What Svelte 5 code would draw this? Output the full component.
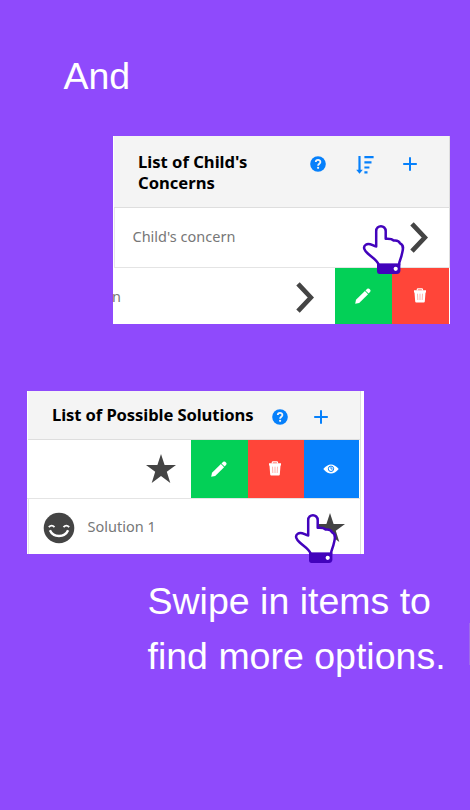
<script>
  const star = 'M15 0 L18.6 11 H30 L20.8 17.7 L24.3 29 L15 22 L5.7 29 L9.2 17.7 L0 11 H11.4 Z';
</script>

{#snippet help()}
  <svg class="help" viewBox="0 0 16 16" width="16" height="16">
    <circle cx="8" cy="8" r="7.8" fill="#0680fb" />
    <path d="M5.8 6.1 C5.8 3.2 10.4 3.2 10.4 6 C10.4 7.7 8.1 7.7 8.1 9.7" fill="none" stroke="#f4f4f4" stroke-width="1.8" />
    <circle cx="8.1" cy="11.8" r="1.1" fill="#f4f4f4" />
  </svg>
{/snippet}

{#snippet plus()}
  <svg class="plus" viewBox="0 0 14 14" width="14" height="14">
    <path d="M7 0.2 V13.8 M0.2 7 H13.8" stroke="#0680fb" stroke-width="2" />
  </svg>
{/snippet}

{#snippet chevron()}
  <svg class="chevron" viewBox="0 0 18 31" width="18" height="31">
    <path d="M2 1.8 L14.8 15.5 L2 29.2" fill="none" stroke="#444" stroke-width="4.7" />
  </svg>
{/snippet}

{#snippet pencil()}
  <svg viewBox="0 0 16 16" width="16" height="16" fill="#fff">
    <path d="M0.2 15.8 L1 11.8 L9.9 3 L13.1 6.2 L4.2 15 Z" />
    <path d="M10.5 2.4 L12.2 .8 Q13.3 0 14.2 .8 L15.2 1.8 Q16 2.7 15.2 3.8 L13.6 5.5 Z" />
  </svg>
{/snippet}

{#snippet trash()}
  <svg viewBox="0 0 14 15" width="14" height="15">
    <path d="M4.3 2.6 V1.4 Q4.3 .8 5 .8 H8.8 Q9.5 .8 9.5 1.4 V2.6" fill="none" stroke="#fff" stroke-width="1.2" />
    <path d="M1 2.3 H13 V4.5 H1 Z M1.5 4.5 H12.5 L11.8 13.5 Q11.7 14.5 10.8 14.5 H3.2 Q2.3 14.5 2.2 13.5 Z" fill="#fff" />
    <path d="M4.5 5.7 L4.8 12 M7 5.7 V12 M9.5 5.7 L9.2 12" stroke="#ff9f99" stroke-width=".8" />
  </svg>
{/snippet}

{#snippet hand(cls)}
  <svg class="hand {cls}" viewBox="0 0 44 52" width="44" height="52">
    <path
      d="M17 42 C14.8 36.5 9.5 34 5.8 30.5 C2.5 27.5 .4 24 3.8 21.7 C7.5 19.2 11 23.2 14.2 23.4 V8.2 C14.2 1.6 23.7 1.6 23.7 8.2 V15.8 Q29.5 15.4 31.7 17.6 Q36.7 17 38 20.4 C43 22.2 40.5 28 39.8 31.5 C39 36 37.2 37.5 37 42 Z"
      fill="#fff" stroke="#4203bc" stroke-width="2.5" stroke-linejoin="round" />
    <path d="M15 40.5 H38.4 V48 Q37.8 51 35 51 H17.5 Q15 51 15 48 Z" fill="#4203bc" />
    <circle cx="33.7" cy="45.8" r="2.1" fill="#fff" />
  </svg>
{/snippet}

<main>
  <p class="and">And</p>

  <section class="panel concerns">
    <header>
      <h2>List of Child's<br />Concerns</h2>
      <div class="tools">
        {@render help()}
        <svg class="sort" viewBox="0 0 18 18" width="18" height="18">
          <path d="M3.5 0 V16" stroke="#0680fb" stroke-width="2.2" />
          <path d="M0.2 13.7 H6.8 L3.5 17.8 Z" fill="#0680fb" />
          <path d="M8.4 1.2 H17.6 M8.4 6.4 H15.5 M8.4 11.5 H13.4 M8.4 16.4 H11.5" stroke="#0680fb" stroke-width="2.2" />
        </svg>
        {@render plus()}
      </div>
    </header>
    <div class="row first">
      <span class="label concern">Child's concern</span>
      {@render chevron()}
    </div>
    <div class="row swiped">
      <span class="label tail">n</span>
      {@render chevron()}
      <div class="action edit">{@render pencil()}</div>
      <div class="action remove">{@render trash()}</div>
    </div>
    {@render hand('upper')}
  </section>

  <section class="panel solutions">
    <header>
      <h2>List of Possible Solutions</h2>
      <div class="tools">
        {@render help()}
        {@render plus()}
      </div>
    </header>
    <div class="row swiped">
      <svg class="star" viewBox="0 0 30 29" width="30" height="29"><path d={star} fill="#444" /></svg>
      <div class="action edit">{@render pencil()}</div>
      <div class="action remove">{@render trash()}</div>
      <div class="action view">
        <svg viewBox="0 0 16 10" width="16" height="10">
          <path d="M.3 5 Q8 -4.2 15.7 5 Q8 14.2 .3 5 Z" fill="#fff" />
          <circle cx="8" cy="4.8" r="2.7" fill="#fff" stroke="#0680fb" stroke-width="1" />
          <path d="M8 3 V5 H9.8" fill="none" stroke="#0680fb" stroke-width=".9" />
        </svg>
      </div>
    </div>
    <div class="row last">
      <svg class="smile" viewBox="0 0 32 32" width="32" height="32">
        <circle cx="16" cy="16" r="15.3" fill="#444" />
        <path d="M5.8 15.2 Q8.7 11.9 11.5 15.2 M20.5 15.2 Q23.3 11.9 26.2 15.2" fill="none" stroke="#fff" stroke-width="1.8" />
        <path d="M6.9 18.3 Q9.5 24 16 24 Q22.5 24 25.1 18.3" fill="none" stroke="#fff" stroke-width="2.4" />
      </svg>
      <span class="label">Solution 1</span>
      <svg class="star" viewBox="0 0 30 29" width="30" height="29"><path d={star} fill="#444" /></svg>
    </div>
    {@render hand('lower')}
  </section>

  <p class="swipe">Swipe in items to<br />find more options.</p>
  <i class="edge"></i>
</main>

<style>
  main {
    position: relative;
    box-sizing: border-box;
    width: 470px;
    height: 810px;
    padding-top: 49px;
    overflow: hidden;
    background: #8f4afc;
    color: #fff;
    font-family: "Liberation Sans", Arial, sans-serif;
  }
  p { margin: 0; font-size: 37.5px; line-height: 55px; white-space: nowrap; }
  .and { margin-left: 63.5px; }
  .swipe { margin: 20px 0 0 147.5px; }
  svg { display: block; flex: none; }
  .panel {
    position: relative;
    width: 337px;
    background: #fff;
    font-family: "Noto Sans", "Open Sans", sans-serif;
  }
  .concerns { height: 188px; margin: 32px 0 0 113px; }
  .solutions { height: 163px; margin: 67px 0 0 27px; }
  header {
    box-sizing: border-box;
    display: flex;
    margin-left: 1px;
    background: #f4f4f4;
    border-bottom: 1px solid #dedede;
    border-right: 1px solid #dedede;
  }
  .concerns header { height: 72px; padding: 15px 32px 0 24px; }
  .solutions header { height: 49px; width: 333px; padding: 13px 32px 0 24px; }
  h2 {
    margin: 0;
    color: #000;
    font-size: 16.6px;
    font-weight: 700;
    line-height: 21px;
    letter-spacing: -0.1px;
    white-space: nowrap;
  }
  .concerns h2 { letter-spacing: 0; }
  .tools { display: flex; margin-left: auto; }
  .concerns .help { margin: 5px 30px 0 0; }
  .sort { margin: 5px 29px 0 0; }
  .concerns .plus { margin-top: 6px; }
  .solutions .help { margin: 5px 26px 0 0; }
  .solutions .plus { margin-top: 6px; }
  .row { box-sizing: border-box; display: flex; align-items: center; }
  .label {
    color: #777;
    font-size: 14.5px;
    line-height: 20px;
    padding-bottom: 3px;
    white-space: nowrap;
  }
  .first {
    height: 60px;
    padding: 0 21px 0 17.5px;
    margin-left: 1px;
    border-left: 1px solid #e8e8e8;
    border-right: 1px solid #dedede;
    border-bottom: 1px solid #e4e4e4;
  }
  .first .chevron { margin-left: auto; }
  .concerns .swiped { height: 56px; margin-right: 1px; }
  .concerns .swiped .label { padding-bottom: 0; }
  .tail { margin-left: -1px; }
  .swiped .chevron { margin: 2px 21px 0 auto; }
  .action {
    box-sizing: border-box;
    display: flex;
    align-items: center;
    justify-content: center;
    align-self: stretch;
    padding: 0 1px 1px 0;
  }
  .edit { width: 57px; background: #03d057; }
  .remove { width: 57px; background: #ff4539; }
  .view { width: 55px; background: #0680fb; }
  .solutions .edit, .solutions .remove { width: 56.5px; }
  .solutions .swiped {
    width: 334px;
    height: 59px;
    padding-right: 1px;
    border-right: 1px solid #dedede;
    border-bottom: 1px solid #e4e4e4;
  }
  .solutions .swiped .star { margin: 0 15px 1px auto; }
  .last {
    width: 333px;
    height: 55px;
    padding: 2px 15px 0 14px;
    margin-left: 1px;
    border-left: 1px solid #e8e8e8;
    border-right: 1px solid #dedede;
  }
  .last .label { margin-left: 12.5px; }
  .last .star { margin-left: auto; }
  .hand { position: absolute; }
  .upper { left: 248.5px; top: 86.5px; }
  .lower { left: 266.5px; top: 120.5px; }
  .edge { position: absolute; right: 0; top: 623px; width: 1px; height: 42px; background: #9d6bea; }
</style>
